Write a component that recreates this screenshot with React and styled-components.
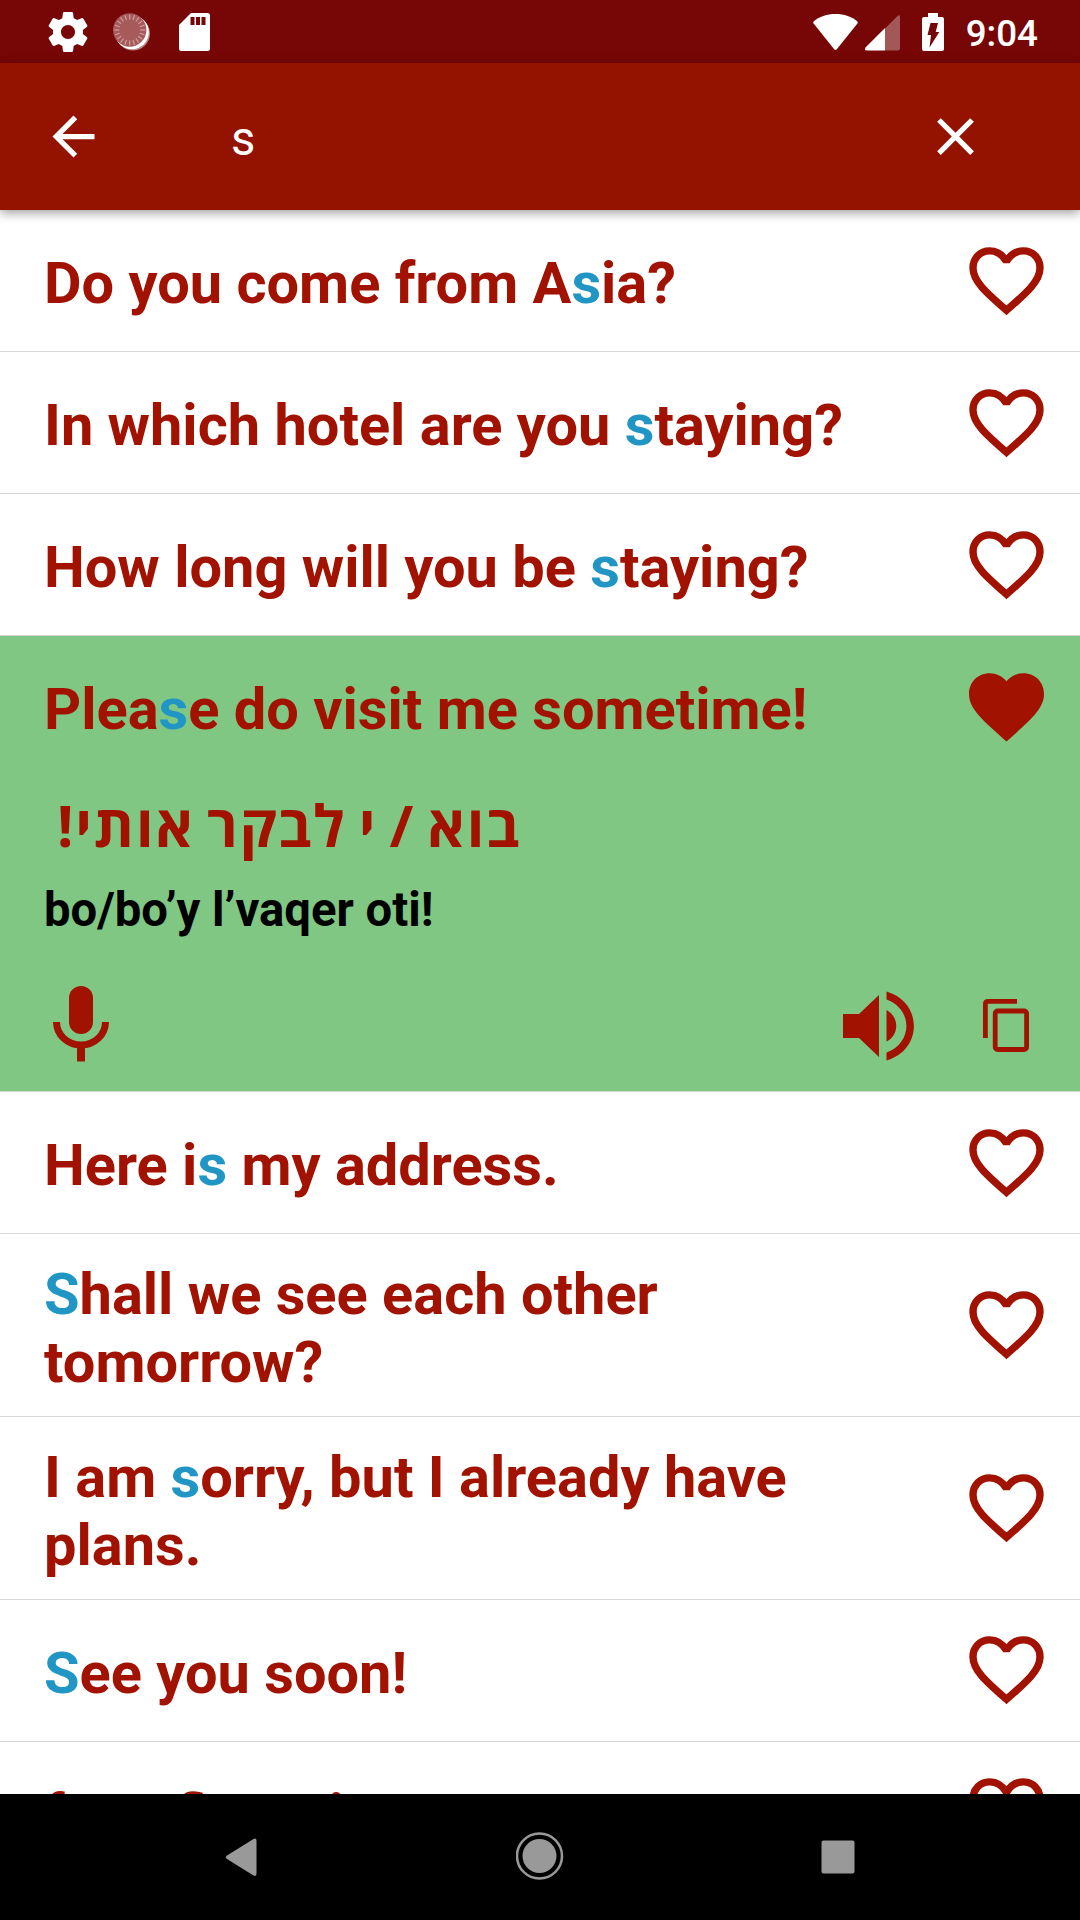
import React from 'react'
import styled, { createGlobalStyle } from 'styled-components'

const GlobalStyle = createGlobalStyle`
  * {
    box-sizing: border-box;
  }
  body {
    margin: 0;
    background: #fff;
    font-family: Roboto, 'Liberation Sans', sans-serif;
  }
  svg {
    display: block;
    flex-shrink: 0;
  }
`

const Screen = styled.div`
  display: flex;
  flex-direction: column;
  width: 1080px;
  height: 1920px;
  overflow: hidden;
`

const StatusBar = styled.header`
  display: flex;
  align-items: center;
  justify-content: space-between;
  flex-shrink: 0;
  height: 63px;
  padding: 0 42px 0 47px;
  background: #770606;
  color: #fff;
`

const StatusGroup = styled.div`
  display: flex;
  align-items: center;
  gap: ${(p) => p.$gap}px;
`

const Clock = styled.span`
  padding-top: 3px;
  font-size: 36.75px;
  font-weight: 500;
  line-height: 43px;
`

const SearchBar = styled.div`
  display: flex;
  align-items: center;
  flex-shrink: 0;
  height: 147px;
  padding: 0 93px 0 42px;
  background: #931300;
  color: #fff;
  box-shadow: 0 3px 10px rgba(0, 0, 0, 0.38);
  z-index: 1;
`

const Query = styled.span`
  flex: 1;
  margin-left: 126px;
  padding-top: 5px;
  font-size: 47.25px;
  line-height: 56px;
`

const List = styled.main`
  flex: 1;
  min-height: 0;
  overflow: hidden;
`

const Row = styled.article`
  border-bottom: 1px solid #d8d8d8;
  background: ${(p) => (p.$open ? '#81c784' : '#fff')};
`

const RowHead = styled.div`
  display: flex;
  align-items: center;
  min-height: 141px;
  padding: 21px 36px 20px 44px;
`

const Phrase = styled.h2`
  flex: 1;
  margin: 0;
  padding: 4.6px 114px 0.4px 0;
  color: #a11200;
  font-size: 57.75px;
  font-weight: 700;
  line-height: 68px;
`

const Match = styled.span`
  color: #2196c4;
`

const Details = styled.div`
  height: 314px;
  padding: 14px 44px 0;
`

const Translation = styled.p`
  width: fit-content;
  margin: 0;
  padding-left: 13px;
  color: #a11200;
  font-family: 'Open Sans', 'Noto Sans', sans-serif;
  font-size: 57.75px;
  font-weight: 700;
  line-height: 68px;
  letter-spacing: 1.8px;
  word-spacing: -4.5px;
  white-space: nowrap;
`

const Transliteration = styled.p`
  margin: 23px 0 0;
  color: #000;
  font-size: 47.25px;
  font-weight: 700;
  line-height: 56px;
`

const Actions = styled.div`
  display: flex;
  align-items: center;
  justify-content: space-between;
  margin-top: 48px;
  padding-right: 7px;
  color: #a11200;
`

const ActionGroup = styled.div`
  display: flex;
  align-items: center;
  gap: 69px;
  padding-top: 3px;
`

const NavBar = styled.nav`
  display: flex;
  align-items: center;
  justify-content: center;
  flex-shrink: 0;
  gap: 250px;
  height: 126px;
  padding-bottom: 2px;
  background: #000;
`

const Heart = ({ filled }) => (
  <svg width="75" height="69" viewBox="0 0 75 69">
    {filled ? (
      <path
        d="M37.500 68.500C14 47.500 0 36 0 21C0 9 9 .3 20.500 .3c7 0 13 3 17 8C41.500 3.300 47.500 .3 54.500 .3 66 .3 75 9 75 21c0 15-14 26.500-37.500 47.500z"
        fill="#a11200"
      />
    ) : (
      <path
        d="M37.500 63.300C17 45.500 4 34 4 21C4 11 11.500 3.900 20.500 3.900c7 0 13 3.600 17 10.600 4-7 10-10.600 17-10.600C63.500 3.900 71 11 71 21c0 13-13 24.500-33.500 42.300z"
        fill="none"
        stroke="#a11200"
        strokeWidth="7.4"
        strokeMiterlimit="1.6"
      />
    )}
  </svg>
)

const Gear = () => (
  <svg width="42" height="42" viewBox="1.5 1.5 21 21" fill="currentColor">
    <path d="M19.430 12.980c.04-.32.07-.64.07-.98s-.03-.66-.07-.98l2.110-1.650c.19-.15.24-.42.12-.64l-2-3.460c-.12-.22-.39-.3-.61-.22l-2.490 1c-.52-.4-1.080-.73-1.690-.98l-.38-2.650C14.460 2.180 14.250 2 14 2h-4c-.25 0-.46.18-.49.42l-.38 2.650c-.61.25-1.170.59-1.690.98l-2.490-1c-.23-.09-.49 0-.61.22l-2 3.460c-.13.22-.07.49.12.64l2.110 1.650c-.04.32-.07.65-.07.98s.03.66.07.98l-2.110 1.650c-.19.15-.24.42-.12.64l2 3.460c.12.22.39.3.61.22l2.490-1c.52.4 1.080.73 1.690.98l.38 2.650c.03.24.24.42.49.42h4c.25 0 .46-.18.49-.42l.38-2.650c.61-.25 1.170-.59 1.690-.98l2.490 1c.23.09.49 0 .61-.22l2-3.460c.12-.22.07-.49-.12-.64l-2.110-1.650zM12 15.500c-1.930 0-3.500-1.570-3.500-3.500s1.570-3.500 3.500-3.500 3.500 1.570 3.500 3.500-1.570 3.500-3.500 3.500z" />
  </svg>
)

const ticks = Array.from({ length: 20 }, (_, i) => i * 18)

const Spinner = () => (
  <svg width="42" height="38" viewBox="0 0 42 38">
    <circle cx="20" cy="20.5" r="17" fill="#fff" opacity=".5" />
    <circle cx="18.8" cy="19.2" r="17" fill="#fff" />
    <circle cx="16.7" cy="17" r="16.7" fill="#a65a5a" />
    {ticks.map((deg) => (
      <path
        key={deg}
        d="M16.700 1.500v5"
        stroke="#cf9f9f"
        strokeWidth="1.2"
        transform={`rotate(${deg} 16.7 17)`}
      />
    ))}
  </svg>
)

const SdCard = () => (
  <svg width="32" height="38" viewBox="0 0 32 38">
    <path
      d="M12 0h16.500Q31 0 31 2.500v33Q31 38 28.500 38h-26Q0 38 0 35.500V12z"
      fill="currentColor"
    />
    <path d="M11.500 4h4v8h-4zM17 4h4v8h-4zM22.500 4h4v8h-4z" fill="#770606" />
  </svg>
)

const Wifi = () => (
  <svg width="45" height="38" viewBox="0 0 45 38">
    <path
      d="M.6 8.500C6 3.500 14 1 22.500 1S39 3.500 44.400 8.500q.8 1 0 2L24 36q-1.500 1.800-3 0L.6 10.500q-.8-1 0-2z"
      fill="currentColor"
    />
  </svg>
)

const Signal = () => (
  <svg width="35" height="38" viewBox="0 0 35 38">
    <path d="M20 15.500L32 3.500Q35 1 35 4v31.500q0 2-2 2H20z" fill="#fff" opacity=".33" />
    <path d="M20 15v22.500H2q-3 0-1.500-3z" fill="#fff" />
  </svg>
)

const Battery = () => (
  <svg width="22" height="38" viewBox="0 0 22 38">
    <path d="M6 0h10v4h4q2 0 2 2v30q0 2-2 2H2q-2 0-2-2V6q0-2 2-2h4z" fill="currentColor" />
    <path d="M8.500 10H16l-2.300 9H17.300L7.500 34.500 9 22H5.500z" fill="#770606" />
  </svg>
)

const BackArrow = () => (
  <svg width="63" height="63" viewBox="0 0 24 24" fill="currentColor">
    <path d="M20 11H7.830l5.590-5.590L12 4l-8 8 8 8 1.410-1.410L7.830 13H20v-2z" />
  </svg>
)

const Close = () => (
  <svg width="63" height="63" viewBox="0 0 24 24" fill="currentColor">
    <path d="M19 6.410L17.590 5 12 10.590 6.410 5 5 6.410 10.590 12 5 17.590 6.410 19 12 13.410 17.590 19 19 17.590 13.410 12z" />
  </svg>
)

const Mic = () => (
  <svg width="74" height="76" viewBox="0 0 74 76">
    <rect x="25" y="0" width="24" height="48" rx="12" fill="currentColor" />
    <path
      d="M12.500 36a24.500 23 0 0 0 49 0"
      fill="none"
      stroke="currentColor"
      strokeWidth="7"
    />
    <path d="M33 60h8v15.500h-8z" fill="currentColor" />
  </svg>
)

const Speaker = () => (
  <svg width="71" height="70" viewBox="0 0 71 70" fill="currentColor">
    <path d="M0 23h16L36 4v62L16 47H0z" />
    <path d="M43.500 19c13 7 13 25 0 31.500zM43.500 0.500c36.500 10.500 36.500 58.500 0 69v-8c26.500-9.500 26.500-43.500 0-53z" />
  </svg>
)

const Copy = () => (
  <svg width="46" height="53" viewBox="0 0 46 53" fill="none" stroke="currentColor" strokeWidth="4.8">
    <path d="M2.400 39V5q0-2.600 2.600-2.600h29" />
    <rect x="12.2" y="12" width="31.4" height="38.5" rx="2.5" />
  </svg>
)

const phrases = [
  { before: 'Do you come from A', match: 's', after: 'ia?' },
  { before: 'In which hotel are you ', match: 's', after: 'taying?' },
  { before: 'How long will you be ', match: 's', after: 'taying?' },
  {
    before: 'Plea',
    match: 's',
    after: 'e do visit me sometime!',
    translation: 'בוא / י לבקר אותי!',
    transliteration: 'bo/bo’y l’vaqer oti!',
  },
  { before: 'Here i', match: 's', after: ' my address.' },
  { before: '', match: 'S', after: 'hall we see each other tomorrow?' },
  { before: 'I am ', match: 's', after: 'orry, but I already have plans.' },
  { before: '', match: 'S', after: 'ee you soon!' },
  { before: 'four, five, ', match: 's', after: 'ix' },
]

const PhraseRow = ({ item }) => {
  const open = Boolean(item.translation)
  return (
    <Row $open={open}>
      <RowHead>
        <Phrase>
          {item.before}
          <Match>{item.match}</Match>
          {item.after}
        </Phrase>
        <Heart filled={open} />
      </RowHead>
      {open && (
        <Details>
          <Translation dir="rtl">{item.translation}</Translation>
          <Transliteration>{item.transliteration}</Transliteration>
          <Actions>
            <Mic />
            <ActionGroup>
              <Speaker />
              <Copy />
            </ActionGroup>
          </Actions>
        </Details>
      )}
    </Row>
  )
}

const App = () => {
  return (
    <>
      <GlobalStyle />
      <Screen>
        <StatusBar>
          <StatusGroup $gap={24}>
            <Gear />
            <Spinner />
            <SdCard />
          </StatusGroup>
          <StatusGroup $gap={22}>
            <StatusGroup $gap={7}>
              <Wifi />
              <Signal />
            </StatusGroup>
            <Battery />
            <Clock>9:04</Clock>
          </StatusGroup>
        </StatusBar>
        <SearchBar>
          <BackArrow />
          <Query>s</Query>
          <Close />
        </SearchBar>
        <List>
          {phrases.map((item) => (
            <PhraseRow key={item.before + item.after} item={item} />
          ))}
        </List>
        <NavBar>
          <svg width="48" height="48" viewBox="0 0 48 48">
            <path d="M9 23.500L35.500 7q3-1.500 3 2v32.500q0 3.500-3 2L9 27q-2.500-1.700 0-3.500z" fill="#999" />
          </svg>
          <svg width="48" height="48" viewBox="0 0 48 48">
            <circle cx="23.5" cy="24" r="22.5" fill="none" stroke="#999" strokeWidth="2.5" />
            <circle cx="23.5" cy="24" r="17" fill="#999" />
          </svg>
          <svg width="48" height="48" viewBox="0 0 48 48">
            <rect x="7.5" y="8.5" width="33" height="33" rx="2" fill="#999" />
          </svg>
        </NavBar>
      </Screen>
    </>
  )
}

export default App
